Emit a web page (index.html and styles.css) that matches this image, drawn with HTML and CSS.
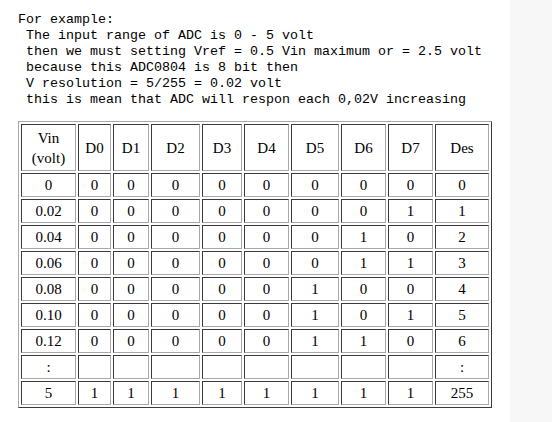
FILE: index.html
```html
<!DOCTYPE html>
<html>
<head>
<meta charset="utf-8">
<link rel="stylesheet" href="styles.css">
</head>
<body>
<div class="page">
  <main class="content">
<pre class="note">For example:
 The input range of ADC is 0 - 5 volt
 then we must setting Vref = 0.5 Vin maximum or = 2.5 volt
 because this ADC0804 is 8 bit then
 V resolution = 5/255 = 0.02 volt
 this is mean that ADC will respon each 0,02V increasing</pre>
    <table class="adc">
      <thead>
        <tr>
          <th class="c-vin">Vin<br>(volt)</th>
          <th class="c-d0">D0</th>
          <th class="c-d1">D1</th>
          <th class="c-d2">D2</th>
          <th class="c-d3">D3</th>
          <th class="c-d4">D4</th>
          <th class="c-d5">D5</th>
          <th class="c-d6">D6</th>
          <th class="c-d7">D7</th>
          <th class="c-des">Des</th>
        </tr>
      </thead>
      <tbody>
        <tr><td>0</td><td>0</td><td>0</td><td>0</td><td>0</td><td>0</td><td>0</td><td>0</td><td>0</td><td>0</td></tr>
        <tr><td>0.02</td><td>0</td><td>0</td><td>0</td><td>0</td><td>0</td><td>0</td><td>0</td><td>1</td><td>1</td></tr>
        <tr><td>0.04</td><td>0</td><td>0</td><td>0</td><td>0</td><td>0</td><td>0</td><td>1</td><td>0</td><td>2</td></tr>
        <tr><td>0.06</td><td>0</td><td>0</td><td>0</td><td>0</td><td>0</td><td>0</td><td>1</td><td>1</td><td>3</td></tr>
        <tr><td>0.08</td><td>0</td><td>0</td><td>0</td><td>0</td><td>0</td><td>1</td><td>0</td><td>0</td><td>4</td></tr>
        <tr><td>0.10</td><td>0</td><td>0</td><td>0</td><td>0</td><td>0</td><td>1</td><td>0</td><td>1</td><td>5</td></tr>
        <tr><td>0.12</td><td>0</td><td>0</td><td>0</td><td>0</td><td>0</td><td>1</td><td>1</td><td>0</td><td>6</td></tr>
        <tr><td>:</td><td></td><td></td><td></td><td></td><td></td><td></td><td></td><td></td><td>:</td></tr>
        <tr><td>5</td><td>1</td><td>1</td><td>1</td><td>1</td><td>1</td><td>1</td><td>1</td><td>1</td><td>255</td></tr>
      </tbody>
    </table>
  </main>
  <aside class="side"></aside>
</div>
</body>
</html>
```

FILE: styles.css
```css
html, body {
  margin: 0;
  padding: 0;
  background: #ffffff;
}

.page {
  display: flex;
  min-height: 422px;
}

.content {
  width: 510px;
  flex: none;
  padding: 12px 0 0 18px;
  box-sizing: border-box;
}

.side {
  flex: 1;
  background: #f7f7f7;
}

.note {
  margin: 0;
  font-family: "Liberation Mono", "Courier New", monospace;
  font-size: 13.33px;
  line-height: 16px;
  color: #000;
}

.adc {
  margin-top: 13px;
  width: 474px;
  table-layout: fixed;
  border-collapse: separate;
  border-spacing: 2px;
  border: 1px solid;
  border-color: #a8a8a8 #3a3a3a #3a3a3a #a8a8a8;
  font-family: "Liberation Serif", "Times New Roman", serif;
  font-size: 15px;
  color: #000;
}

.adc th,
.adc td {
  box-sizing: border-box;
  border: 1px solid;
  border-color: #3a3a3a #a8a8a8 #a8a8a8 #3a3a3a;
  padding: 1px;
  text-align: center;
  vertical-align: middle;
  font-weight: normal;
}

.adc th {
  height: 47px;
  line-height: 20px;
}

.adc td {
  height: 24px;
  line-height: 18px;
}

.c-vin { width: 55px; }
.c-d0 { width: 33px; }
.c-d1 { width: 36px; }
.c-d2 { width: 49px; }
.c-d3 { width: 40px; }
.c-d4 { width: 45px; }
.c-d5 { width: 48px; }
.c-d6 { width: 45px; }
.c-d7 { width: 45px; }
.c-des { width: 54px; }
```
